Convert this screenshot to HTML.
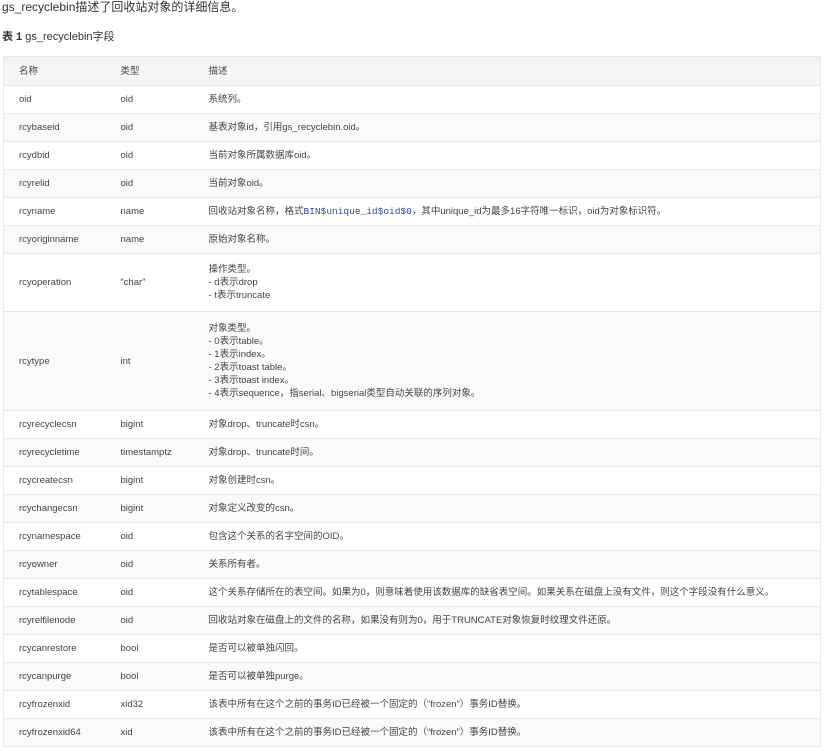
<!DOCTYPE html>
<html><head><meta charset="utf-8"><style>
body{margin:0;background:#fff;font-family:"Liberation Sans","Noto Sans CJK SC",sans-serif;color:#333;width:825px;height:751px;overflow:hidden}
.p{position:absolute;left:2px;top:-2px;font-size:12px;color:#333}
.cap{position:absolute;left:2px;top:28px;font-size:11px;color:#333}
table{position:absolute;left:3px;top:56px;width:818px;border-collapse:collapse;font-size:9.5px;color:#444;table-layout:fixed;border:1px solid #e8e8e8}
td,th{border:0;border-top:1px solid #e8e8e8;padding:0 0 0 15px;text-align:left;font-weight:normal;line-height:13px}
th{background:#f5f5f5;height:28px}
tr:nth-child(even) td{background:#fafafa}
tr td{height:27px}
code{font-family:"Liberation Mono",monospace;color:#3048a8;font-size:9.5px}
</style></head><body>
<div class="p">gs_recyclebin描述了回收站对象的详细信息。</div>
<div class="cap"><b>表 1</b> gs_recyclebin字段</div>
<table>
<colgroup><col style="width:102px"><col style="width:88px"><col></colgroup>
<thead><tr><th>名称</th><th>类型</th><th>描述</th></tr></thead>
<tbody>
<tr><td>oid</td><td>oid</td><td>系统列。</td></tr>
<tr><td>rcybaseid</td><td>oid</td><td>基表对象id，引用gs_recyclebin.oid。</td></tr>
<tr><td>rcydbid</td><td>oid</td><td>当前对象所属数据库oid。</td></tr>
<tr><td>rcyrelid</td><td>oid</td><td>当前对象oid。</td></tr>
<tr><td>rcyname</td><td>name</td><td>回收站对象名称，格式<code>BIN$unique_id$oid$0</code>，其中unique_id为最多16字符唯一标识，oid为对象标识符。</td></tr>
<tr><td>rcyoriginname</td><td>name</td><td>原始对象名称。</td></tr>
<tr><td style="height:57px">rcyoperation</td><td>“char”</td><td>操作类型。<br>- d表示drop<br>- t表示truncate</td></tr>
<tr><td style="height:98px">rcytype</td><td>int</td><td>对象类型。<br>- 0表示table。<br>- 1表示index。<br>- 2表示toast table。<br>- 3表示toast index。<br>- 4表示sequence，指serial、bigserial类型自动关联的序列对象。</td></tr>
<tr><td>rcyrecyclecsn</td><td>bigint</td><td>对象drop、truncate时csn。</td></tr>
<tr><td>rcyrecycletime</td><td>timestamptz</td><td>对象drop、truncate时间。</td></tr>
<tr><td>rcycreatecsn</td><td>bigint</td><td>对象创建时csn。</td></tr>
<tr><td>rcychangecsn</td><td>bigint</td><td>对象定义改变的csn。</td></tr>
<tr><td>rcynamespace</td><td>oid</td><td>包含这个关系的名字空间的OID。</td></tr>
<tr><td>rcyowner</td><td>oid</td><td>关系所有者。</td></tr>
<tr><td>rcytablespace</td><td>oid</td><td>这个关系存储所在的表空间。如果为0，则意味着使用该数据库的缺省表空间。如果关系在磁盘上没有文件，则这个字段没有什么意义。</td></tr>
<tr><td>rcyrelfilenode</td><td>oid</td><td>回收站对象在磁盘上的文件的名称，如果没有则为0，用于TRUNCATE对象恢复时纹理文件还原。</td></tr>
<tr><td>rcycanrestore</td><td>bool</td><td>是否可以被单独闪回。</td></tr>
<tr><td>rcycanpurge</td><td>bool</td><td>是否可以被单独purge。</td></tr>
<tr><td>rcyfrozenxid</td><td>xid32</td><td>该表中所有在这个之前的事务ID已经被一个固定的（“frozen”）事务ID替换。</td></tr>
<tr><td>rcyfrozenxid64</td><td>xid</td><td>该表中所有在这个之前的事务ID已经被一个固定的（“frozen”）事务ID替换。</td></tr>
</tbody></table>
</body></html>
